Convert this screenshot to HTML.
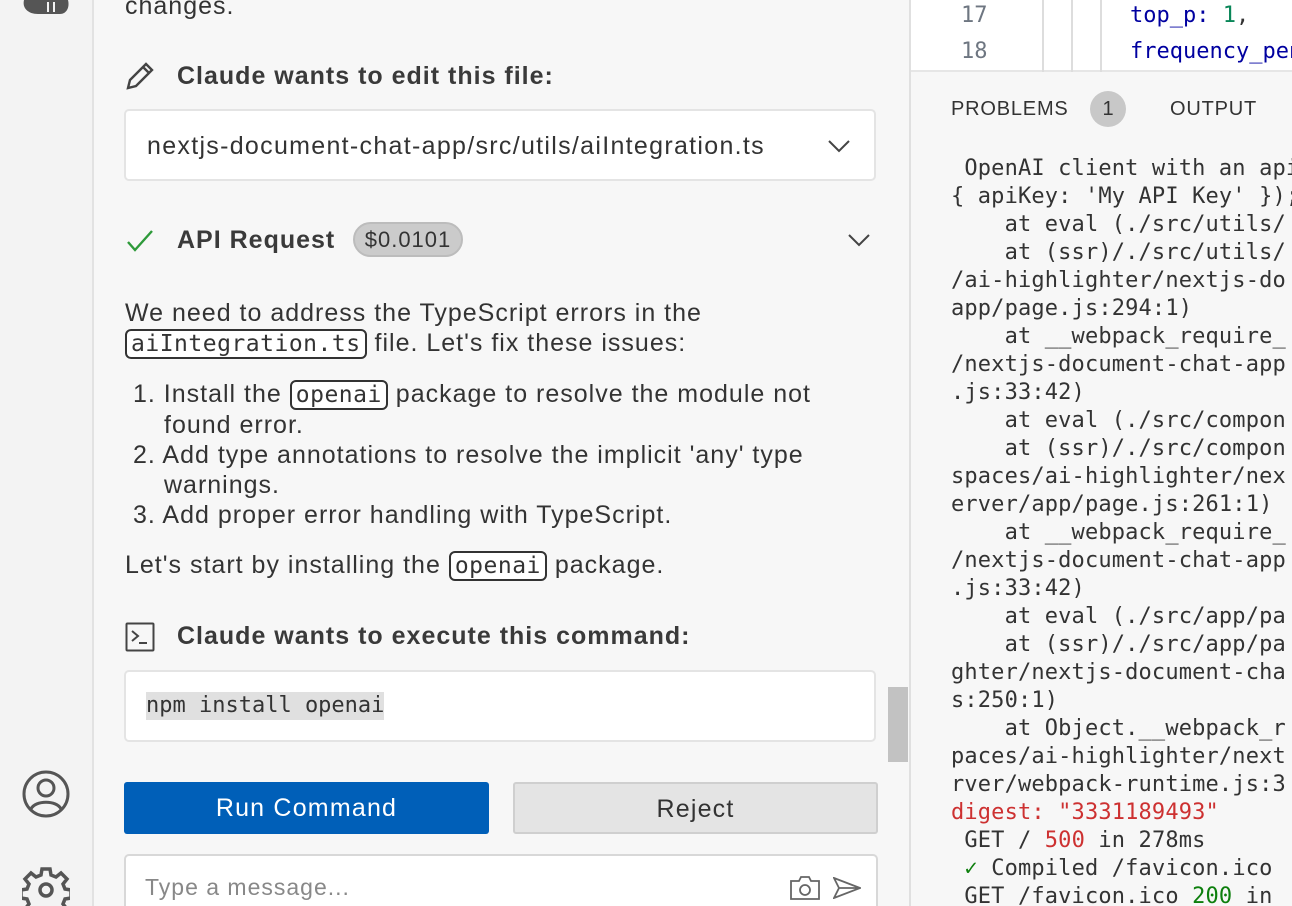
<!DOCTYPE html>
<html><head><meta charset="utf-8"><style>
*{box-sizing:border-box;margin:0;padding:0}
html,body{width:1292px;height:906px;overflow:hidden}
body{background:#f7f7f7;font-family:"Liberation Sans",sans-serif;color:#333;position:relative}
.abs{position:absolute}
.side{left:0;top:0;width:94px;height:906px;background:#f3f3f3;border-right:2px solid #e2e2e2}
.chat{left:94px;top:0;width:815px;height:906px;background:#f7f7f7}
.t{font-size:25px;line-height:30px;color:#333;white-space:nowrap;letter-spacing:1px}
.b{font-weight:bold;color:#3a3a3a}
.box{background:#fff;border:2px solid #e4e4e4;border-radius:5px}
code{font-family:"DejaVu Sans Mono",monospace;font-size:23px;letter-spacing:0.5px;border:2px solid #333;border-radius:6px;padding:0 4px;background:#fff}
.mono{font-family:"DejaVu Sans Mono",monospace;font-size:22px;line-height:28px;white-space:pre;color:#333}
.right{left:909px;top:0;width:383px;height:906px;border-left:2px solid #e0e0e0;background:#f7f7f7}
</style></head><body>
<div class="abs side"></div>
<svg class="abs" style="left:20px;top:0" width="52" height="16" viewBox="0 0 52 16"><path d="M4 0 C2 8 8 14 18 14 H40 C46 14 50 8 48 0Z" fill="#555"/><path d="M28 2 v10 M34 2 v10" stroke="#f3f3f3" stroke-width="2"/></svg>
<svg class="abs" style="left:22px;top:770px" width="48" height="48" viewBox="0 0 48 48" fill="none" stroke="#555" stroke-width="3"><circle cx="24" cy="24" r="22"/><circle cx="24" cy="18" r="8"/><path d="M9 39 C13 30 35 30 39 39"/></svg>
<svg class="abs" style="left:22px;top:866px" width="48" height="40" viewBox="0 0 48 40" fill="none" stroke="#555" stroke-width="3.5"><path d="M20 3h8l1 6 5 2 5-4 6 6-4 5 2 5 6 1v8l-6 1-2 5 4 5-6 6-5-4-5 2-1 6h-8l-1-6-5-2-5 4-6-6 4-5-2-5-6-1v-8l6-1 2-5-4-5 6-6 5 4 5-2z"/><circle cx="24" cy="24" r="6"/></svg>

<div class="abs chat"></div>
<div class="abs t" style="left:125px;top:-9px">changes.</div>
<svg class="abs" style="left:125px;top:61px" width="32" height="30" viewBox="0 0 32 30" fill="none" stroke="#444" stroke-width="2.4"><path d="M3 27 L5 19 L21 3 L27 9 L11 25 Z M18 6 L24 12"/></svg>
<div class="abs t b" style="left:177px;top:61px">Claude wants to edit this file:</div>
<div class="abs box" style="left:124px;top:109px;width:752px;height:72px"></div>
<div class="abs t" style="left:147px;top:131px;letter-spacing:1.3px">nextjs-document-chat-app/src/utils/aiIntegration.ts</div>
<svg class="abs" style="left:828px;top:139px" width="22" height="14" viewBox="0 0 22 14" fill="none" stroke="#444" stroke-width="2"><path d="M1 2 L11 12 L21 2"/></svg>
<svg class="abs" style="left:126px;top:229px" width="28" height="24" viewBox="0 0 28 24" fill="none" stroke="#2e9a3a" stroke-width="2.4"><path d="M2 13 L9 21 L26 2"/></svg>
<div class="abs t b" style="left:177px;top:225px">API Request</div>
<div class="abs" style="left:353px;top:222px;width:110px;height:35px;border-radius:18px;background:#cbcbcb;border:2px solid #bcbcbc;font-size:22px;line-height:31px;text-align:center;color:#333;letter-spacing:1px">$0.0101</div>
<svg class="abs" style="left:848px;top:233px" width="22" height="14" viewBox="0 0 22 14" fill="none" stroke="#444" stroke-width="2"><path d="M1 2 L11 12 L21 2"/></svg>
<div class="abs t" style="left:125px;top:298px">We need to address the TypeScript errors in the</div>
<div class="abs t" style="left:125px;top:328px"><code>aiIntegration.ts</code> file. Let's fix these issues:</div>
<div class="abs t" style="left:133px;top:379px">1. Install the <code>openai</code> package to resolve the module not</div>
<div class="abs t" style="left:164px;top:410px">found error.</div>
<div class="abs t" style="left:133px;top:440px">2. Add type annotations to resolve the implicit 'any' type</div>
<div class="abs t" style="left:164px;top:470px">warnings.</div>
<div class="abs t" style="left:133px;top:500px">3. Add proper error handling with TypeScript.</div>
<div class="abs t" style="left:125px;top:550px">Let's start by installing the <code>openai</code> package.</div>
<svg class="abs" style="left:125px;top:622px" width="30" height="30" viewBox="0 0 30 30" fill="none" stroke="#444" stroke-width="2"><rect x="1.5" y="1.5" width="27" height="27" rx="1"/><path d="M7 9 L13 14 L7 19 M14 21 H22"/></svg>
<div class="abs t b" style="left:177px;top:621px">Claude wants to execute this command:</div>
<div class="abs box" style="left:124px;top:670px;width:752px;height:72px"></div>
<div class="abs mono" style="left:146px;top:692px;background:#e0e0e0">npm install openai</div>
<div class="abs" style="left:888px;top:687px;width:20px;height:75px;background:#c2c2c2"></div>
<div class="abs" style="left:124px;top:782px;width:365px;height:52px;background:#005fb8;border-radius:3px;color:#fff;font-size:25px;letter-spacing:1.2px;line-height:52px;text-align:center">Run Command</div>
<div class="abs" style="left:513px;top:782px;width:365px;height:52px;background:#e4e4e4;border:2px solid #cfcfcf;border-radius:3px;color:#333;font-size:25px;letter-spacing:1.2px;line-height:50px;text-align:center">Reject</div>
<div class="abs box" style="left:124px;top:854px;width:754px;height:70px;border-color:#d8d8d8"></div>
<div class="abs t" style="left:145px;top:872px;color:#888;font-size:23px">Type a message...</div>
<svg class="abs" style="left:790px;top:876px" width="30" height="24" viewBox="0 0 30 24" fill="none" stroke="#666" stroke-width="1.8"><path d="M1 5 H9 L11 1 H19 L21 5 H29 V23 H1Z"/><circle cx="15" cy="14" r="5"/></svg>
<svg class="abs" style="left:833px;top:877px" width="28" height="22" viewBox="0 0 28 22" fill="none" stroke="#666" stroke-width="1.8"><path d="M1 1 L27 11 L1 21 L6 11 Z M6 11 H27"/></svg>

<div class="abs right"></div>
<div class="abs" style="left:911px;top:0;width:381px;height:72px;background:#fff;border-bottom:2px solid #e6e6e6"></div>
<div class="abs" style="left:1042px;top:0;width:2px;height:72px;background:#ddd"></div>
<div class="abs" style="left:1071px;top:0;width:2px;height:72px;background:#ddd"></div>
<div class="abs" style="left:1100px;top:0;width:2px;height:72px;background:#ddd"></div>
<div class="abs mono" style="left:961px;top:-2px;color:#6e7681;line-height:36px">17
18</div>
<div class="abs mono" style="left:1130px;top:-2px;color:#0000a0;line-height:36px">top_p: <span style="color:#098658">1</span><span style="color:#333">,</span>
frequency_penalty</div>
<div class="abs" style="left:951px;top:98px;font-size:20px;color:#333;letter-spacing:.8px">PROBLEMS</div>
<div class="abs" style="left:1090px;top:91px;width:36px;height:36px;border-radius:18px;background:#c8c8c8;font-size:20px;line-height:36px;text-align:center;color:#333">1</div>
<div class="abs" style="left:1170px;top:98px;font-size:20px;color:#333;letter-spacing:.8px">OUTPUT</div>
<div class="abs mono" style="left:951px;top:155px;letter-spacing:0.15px"> OpenAI client with an api
{ apiKey: 'My API Key' });
    at eval (./src/utils/
    at (ssr)/./src/utils/
/ai-highlighter/nextjs-do
app/page.js:294:1)
    at __webpack_require_
/nextjs-document-chat-app
.js:33:42)
    at eval (./src/compon
    at (ssr)/./src/compon
spaces/ai-highlighter/nex
erver/app/page.js:261:1)
    at __webpack_require_
/nextjs-document-chat-app
.js:33:42)
    at eval (./src/app/pa
    at (ssr)/./src/app/pa
ghter/nextjs-document-cha
s:250:1)
    at Object.__webpack_r
paces/ai-highlighter/next
rver/webpack-runtime.js:3
<span style="color:#cd3131">digest: "3331189493"</span>
 GET / <span style="color:#cd3131">500</span> in 278ms
 <span style="color:#0d7f0d">✓</span> Compiled /favicon.ico
 GET /favicon.ico <span style="color:#0d7f0d">200</span> in</div>
</body></html>
